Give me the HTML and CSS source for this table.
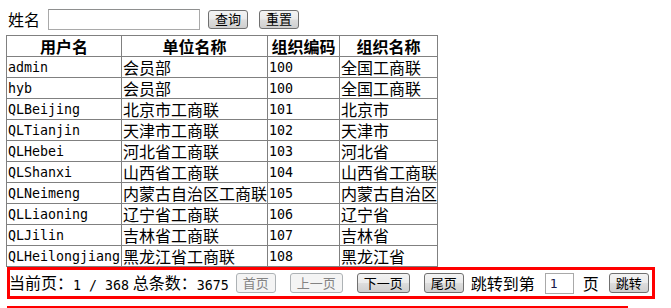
FILE: index.html
```html
<!DOCTYPE html>
<html lang="zh-CN">
<head>
<meta charset="utf-8">
<title>用户列表</title>
<link rel="stylesheet" href="styles.css">
</head>
<body>
<div class="page">
  <form class="search">
    <label class="lbl">姓名</label>
    <input class="txt" type="text">
    <button type="button" class="btn btn-query">查询</button>
    <button type="button" class="btn btn-reset">重置</button>
  </form>

  <table class="grid">
    <colgroup>
      <col class="c1"><col class="c2"><col class="c3"><col class="c4">
    </colgroup>
    <thead>
      <tr><th>用户名</th><th>单位名称</th><th>组织编码</th><th>组织名称</th></tr>
    </thead>
    <tbody>
      <tr><td class="m">admin</td><td>会员部</td><td class="m">100</td><td>全国工商联</td></tr>
      <tr><td class="m">hyb</td><td>会员部</td><td class="m">100</td><td>全国工商联</td></tr>
      <tr><td class="m">QLBeijing</td><td>北京市工商联</td><td class="m">101</td><td>北京市</td></tr>
      <tr><td class="m">QLTianjin</td><td>天津市工商联</td><td class="m">102</td><td>天津市</td></tr>
      <tr><td class="m">QLHebei</td><td>河北省工商联</td><td class="m">103</td><td>河北省</td></tr>
      <tr><td class="m">QLShanxi</td><td>山西省工商联</td><td class="m">104</td><td>山西省工商联</td></tr>
      <tr><td class="m">QLNeimeng</td><td>内蒙古自治区工商联</td><td class="m">105</td><td>内蒙古自治区</td></tr>
      <tr><td class="m">QLLiaoning</td><td>辽宁省工商联</td><td class="m">106</td><td>辽宁省</td></tr>
      <tr><td class="m">QLJilin</td><td>吉林省工商联</td><td class="m">107</td><td>吉林省</td></tr>
      <tr><td class="m">QLHeilongjiang</td><td>黑龙江省工商联</td><td class="m">108</td><td>黑龙江省</td></tr>
    </tbody>
  </table>

  <div class="pager">
    <span class="info">当前页：<span class="mi">1 / 368</span> 总条数：<span class="mi">3675</span></span>
    <button type="button" class="btn pbtn b-first" disabled>首页</button>
    <button type="button" class="btn pbtn b-prev" disabled>上一页</button>
    <button type="button" class="btn pbtn b-next">下一页</button>
    <button type="button" class="btn pbtn b-last">尾页</button>
    <span class="jump">跳转到第</span>
    <input class="pnum" type="text" value="1">
    <span class="unit">页</span>
    <button type="button" class="btn pbtn b-go">跳转</button>
  </div>
  <div class="rule"></div>
</div>
</body>
</html>
```

FILE: styles.css
```css
html, body {
  margin: 0;
  padding: 0;
  background: #ffffff;
}

body {
  font-family: "Noto Sans CJK SC", "Liberation Sans", sans-serif;
  color: #000;
  font-size: 16px;
}

.page {
  padding: 8px 0 0 6px;
  width: 665px;
  box-sizing: border-box;
}

/* search row */
.search {
  display: flex;
  align-items: center;
  height: 22px;
  margin: 0 0 0 2px;
}

.lbl {
  font-size: 16px;
  line-height: 20px;
}

.txt {
  box-sizing: border-box;
  width: 152px;
  height: 21px;
  margin: 0 0 0 8px;
  padding: 0 2px;
  border: 1px solid #a9a9a9;
  border-top-color: #8e8f8f;
  background: #fff;
  outline: none;
}

.btn {
  box-sizing: border-box;
  height: 19px;
  padding: 0 6px;
  border: 1px solid #707070;
  border-radius: 3px;
  background: linear-gradient(#f3f3f3 0%, #ebebeb 48%, #dddddd 52%, #cfcfcf 100%);
  font-family: "Noto Sans CJK SC", sans-serif;
  font-size: 13px;
  line-height: 16px;
  color: #000;
  cursor: default;
}

.btn:disabled {
  color: #838383;
  border-color: #adb2b5;
  background: #f4f4f4;
}

.btn-query {
  margin-left: 8px;
  width: 40px;
}

.btn-reset {
  margin-left: 11px;
  width: 40px;
}

/* table */
.grid {
  margin-top: 5px;
  border-collapse: collapse;
  table-layout: fixed;
  width: 432px;
  border: 1px solid #808080;
}

.grid col.c1 { width: 115px; }
.grid col.c2 { width: 146px; }
.grid col.c3 { width: 72px; }
.grid col.c4 { width: 98px; }

.grid th,
.grid td {
  border: 1px solid #808080;
  padding: 0 1px;
  height: 20px;
  line-height: 20px;
  white-space: nowrap;
  overflow: hidden;
  vertical-align: middle;
}

.grid th {
  font-size: 16px;
  font-weight: bold;
  text-align: center;
}

.grid td {
  font-size: 16px;
  text-align: left;
}

.grid td.m {
  font-family: "DejaVu Sans Mono", "Liberation Mono", monospace;
  font-size: 13.3px;
  padding-top: 2px;
  height: 18px;
  line-height: 18px;
}

/* pager */
.pager {
  margin: 0 0 0 1px;
  box-sizing: border-box;
  width: 648px;
  height: 32px;
  border: 3px solid #ff0000;
  display: flex;
  align-items: center;
  white-space: nowrap;
}

.info {
  font-size: 16px;
  line-height: 20px;
  margin-left: -1px;
}

.mi {
  font-family: "DejaVu Sans Mono", "Liberation Mono", monospace;
  font-size: 13.3px;
  position: relative;
  top: 1px;
}

.pbtn {
  height: 20px;
}

.b-first { margin-left: 7px; width: 40px; }
.b-prev  { margin-left: 14px; width: 53px; }
.b-next  { margin-left: 14px; width: 53px; }
.b-last  { margin-left: 14px; width: 40px; }

.jump {
  margin-left: 7px;
  font-size: 16px;
}

.pnum {
  box-sizing: border-box;
  margin-left: 10px;
  width: 29px;
  height: 21px;
  padding: 0 4px;
  border: 1px solid #a9a9a9;
  font-family: "DejaVu Sans Mono", monospace;
  font-size: 13px;
  color: #1a1a4a;
  outline: none;
}

.unit {
  margin-left: 9px;
  font-size: 16px;
}

.b-go {
  margin-left: 10px;
  width: 40px;
}

.rule {
  margin: 7px 0 0 1px;
  width: 621px;
  height: 2px;
  background: #ff0000;
}
```
